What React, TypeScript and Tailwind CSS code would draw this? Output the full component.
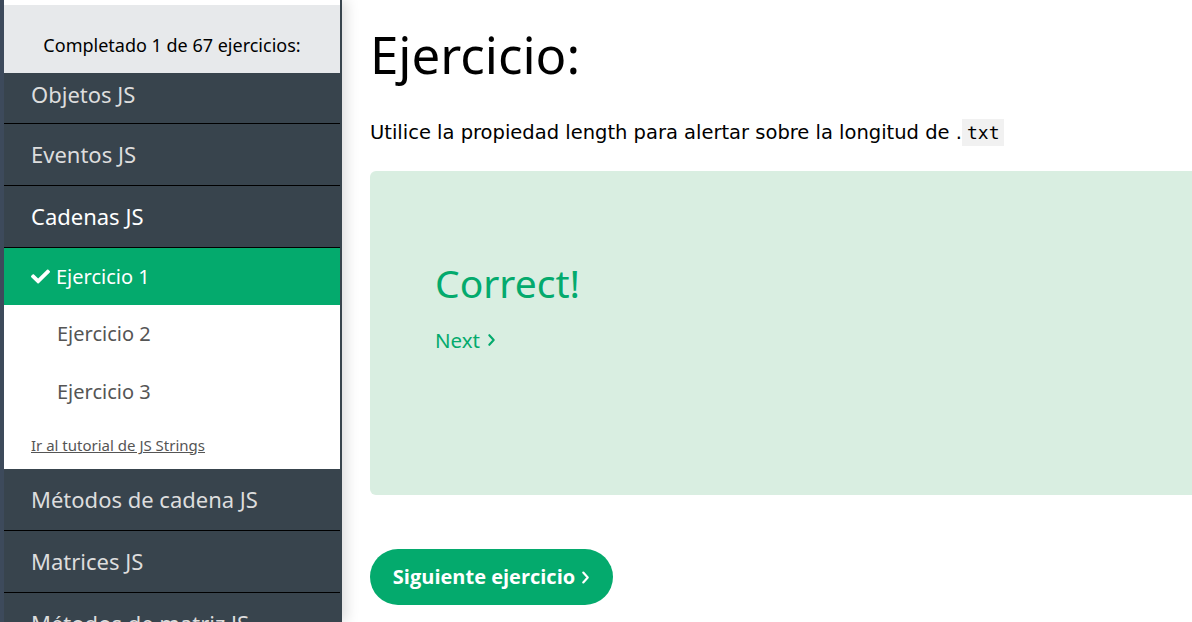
import React from 'react';

const GREEN = '#04aa6d';

function Check() {
    return (
        <svg viewBox="0 0 512 512" className="h-[19px] w-[19px] fill-white">
            <path d="M173.9 439.4l-166.4-166.4c-10-10-10-26.2 0-36.2l36.2-36.2c10-10 26.2-10 36.2 0L192 312.7 432.1 72.6c10-10 26.2-10 36.2 0l36.2 36.2c10 10 10 26.2 0 36.2L210.1 439.4c-10 10-26.2 10-36.2 0z" />
        </svg>
    );
}

function Chevron({ className }: { className?: string }) {
    return (
        <svg viewBox="0 0 10 16" className={className} fill="none" stroke="currentColor" strokeWidth="2.4" strokeLinecap="round" strokeLinejoin="round">
            <path d="M2.5 2.5 L7.5 8 L2.5 13.5" />
        </svg>
    );
}

function Topic({ label, bright, first }: { label: string; bright?: boolean; first?: boolean }) {
    return (
        <div
            className={`flex shrink-0 items-center px-[27px] ${first ? 'h-[51px] pb-[8px]' : 'h-[62px]'} border-b border-black text-[22px] ${bright ? 'text-white' : 'text-[#dddddd]'}`}
        >
            {label}
        </div>
    );
}

export default function App() {
    return (
        <div className="flex h-[622px] w-[1192px] overflow-hidden bg-white" style={{ fontFamily: '"Noto Sans", "Open Sans", sans-serif' }}>
            {/* Sidebar */}
            <aside className="relative z-10 flex h-full w-[342px] shrink-0 flex-col overflow-hidden border-l-4 border-[#3d4a5b] bg-[#38444d] pr-[2px] shadow-[5px_0_12px_rgba(0,0,0,0.13)]">
                <div className="h-[5px] shrink-0 bg-white" />
                <div className="flex h-[68px] shrink-0 items-center justify-center bg-[#e7e9eb] pt-[12px] text-[18px] text-black">
                    Completado 1 de 67 ejercicios:
                </div>
                <Topic label="Objetos JS" first />
                <Topic label="Eventos JS" />
                <Topic label="Cadenas JS" bright />
                <div className="shrink-0 bg-white">
                    <div className="flex h-[57px] items-center gap-[6px] px-[27px] text-[20px] text-white" style={{ backgroundColor: GREEN }}>
                        <Check />
                        <span>Ejercicio 1</span>
                    </div>
                    <div className="flex h-[58px] items-center pl-[53px] text-[20px] text-[#555555]">Ejercicio 2</div>
                    <div className="flex h-[58px] items-center pl-[53px] text-[20px] text-[#555555]">Ejercicio 3</div>
                    <div className="flex h-[48px] items-center px-[27px] text-[15px] text-[#555555] underline">
                        Ir al tutorial de JS Strings
                    </div>
                </div>
                <Topic label="Métodos de cadena JS" />
                <Topic label="Matrices JS" />
                <Topic label="Métodos de matriz JS" />
            </aside>

            {/* Main */}
            <main className="flex flex-1 flex-col pl-[28px]">
                <h1 className="mt-[16px] text-[51px] leading-[76px] text-black">Ejercicio:</h1>
                <p className="mt-[26px] text-[19.5px] leading-[29px] text-black" style={{ fontFamily: '"DejaVu Sans", Verdana, sans-serif' }}>
                    Utilice la propiedad length para alertar sobre la longitud de .
                    <code className="bg-[#f1f1f1] px-[5px] py-[3px] text-[18px]" style={{ fontFamily: '"DejaVu Sans Mono", Consolas, monospace' }}>
                        txt
                    </code>
                </p>
                <div className="mt-[24px] h-[324px] w-[840px] shrink-0 rounded-[6px] bg-[#d9eee1] pl-[65px] pt-[86px]">
                    <div className="text-[39px] leading-[52px]" style={{ color: GREEN }}>Correct!</div>
                    <div className="mt-[17px] flex h-[28px] items-center gap-[7px] text-[20.5px]" style={{ color: GREEN }}>
                        <span>Next</span>
                        <Chevron className="h-[14px] w-[9px]" />
                    </div>
                </div>
                <button
                    className="mt-[54px] flex h-[56px] w-[243px] shrink-0 items-center justify-center gap-[6px] rounded-full text-[20px] font-bold text-white"
                    style={{ backgroundColor: GREEN, fontFamily: '"Open Sans", sans-serif' }}
                >
                    <span>Siguiente ejercicio</span>
                    <Chevron className="h-[15px] w-[9px]" />
                </button>
            </main>
        </div>
    );
}
